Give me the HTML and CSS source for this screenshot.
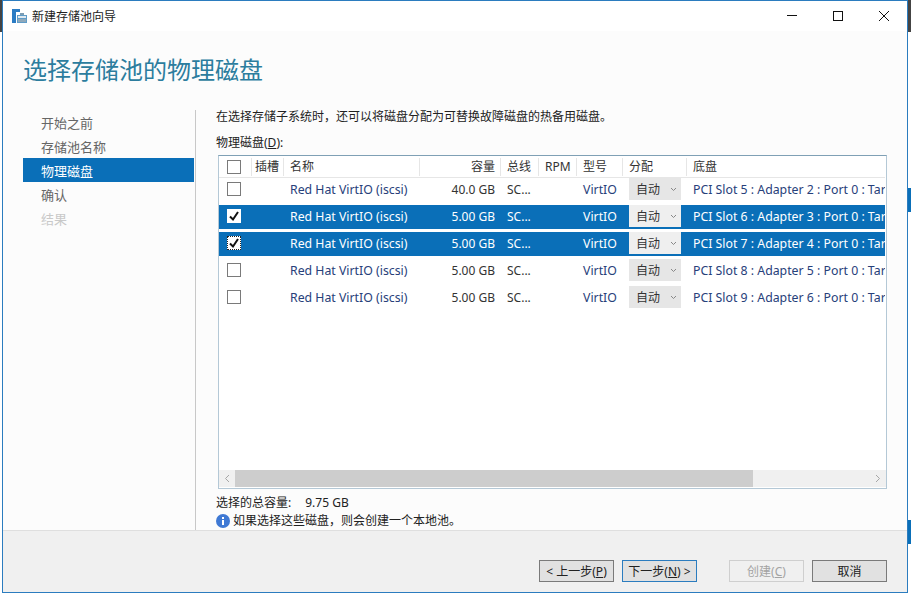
FILE: index.html
```html
<!DOCTYPE html>
<html lang="zh-CN">
<head>
  <meta charset="UTF-8" />
  <title>新建存储池向导</title>
  <link rel="stylesheet" href="styles.css">
</head>
<body>
  <div class="desk desk-tl"></div>
  <div class="desk desk-tr"></div>
  <div class="desk desk-b1"></div>
  <div class="desk desk-b2"></div>

  <div class="window">
    <div class="titlebar">
      <svg class="app-icon" width="15" height="14" viewBox="0 0 15 14">
        <path d="M0 0h8v3H4v11H0z" fill="#2b7cc4"/>
        <path d="M5 6h10v8H5z" fill="#5f9cc8"/>
        <path d="M6 7h8v2H6z" fill="#dfe9f0"/>
        <path d="M6 10h8v3H6z" fill="#8fa9bb"/>
        <path d="M8 4h4v2H8z" fill="#7d9db3"/>
      </svg>
      <span class="title-text">新建存储池向导</span>
      <div class="win-controls">
        <svg width="12" height="12" viewBox="0 0 12 12"><path d="M1 5.5h10" stroke="#111" stroke-width="1"/></svg>
        <svg width="12" height="12" viewBox="0 0 12 12"><rect x="1.5" y="1.5" width="9" height="9" fill="none" stroke="#111"/></svg>
        <svg width="12" height="12" viewBox="0 0 12 12"><path d="M1 1l10 10M11 1L1 11" stroke="#111" stroke-width="1"/></svg>
      </div>
    </div>

    <h1 class="heading">选择存储池的物理磁盘</h1>

    <div class="main">
      <ul class="steps">
        <li>开始之前</li>
        <li>存储池名称</li>
        <li class="active">物理磁盘</li>
        <li>确认</li>
        <li class="off">结果</li>
      </ul>

      <div class="content">
        <p class="intro">在选择存储子系统时，还可以将磁盘分配为可替换故障磁盘的热备用磁盘。</p>
        <p class="list-label">物理磁盘(<u>D</u>):</p>

        <div class="disk-table">
          <div class="row head">
            <div class="cell c-check"><span class="box"></span></div>
            <div class="cell c-slot">插槽</div>
            <div class="cell">名称</div>
            <div class="cell right">容量</div>
            <div class="cell">总线</div>
            <div class="cell">RPM</div>
            <div class="cell">型号</div>
            <div class="cell">分配</div>
            <div class="cell">底盘</div>
          </div>

          <div class="rows">
            <div class="row">
              <div class="cell c-check"><span class="box"></span></div>
              <div class="cell"></div>
              <div class="cell link">Red Hat VirtIO (iscsi)</div>
              <div class="cell right">40.0 GB</div>
              <div class="cell">SC...</div>
              <div class="cell"></div>
              <div class="cell link">VirtIO</div>
              <div class="cell"><span class="combo">自动<svg width="7" height="5" viewBox="0 0 7 5"><path d="M1 1l2.500 2.500L6 1" fill="none" stroke="#888"/></svg></span></div>
              <div class="cell link">PCI Slot 5 : Adapter 2 : Port 0 : Tar</div>
            </div>

            <div class="row selected">
              <div class="cell c-check"><span class="box checked"><svg width="12" height="12" viewBox="0 0 12 12"><path d="M2 6.500l3 3 5-7.500" fill="none" stroke="#111" stroke-width="2"/></svg></span></div>
              <div class="cell"></div>
              <div class="cell link">Red Hat VirtIO (iscsi)</div>
              <div class="cell right">5.00 GB</div>
              <div class="cell">SC...</div>
              <div class="cell"></div>
              <div class="cell link">VirtIO</div>
              <div class="cell"><span class="combo">自动<svg width="7" height="5" viewBox="0 0 7 5"><path d="M1 1l2.500 2.500L6 1" fill="none" stroke="#888"/></svg></span></div>
              <div class="cell link">PCI Slot 6 : Adapter 3 : Port 0 : Tar</div>
            </div>

            <div class="row selected">
              <div class="cell c-check"><span class="box checked focus"><svg width="12" height="12" viewBox="0 0 12 12"><path d="M2 6.500l3 3 5-7.500" fill="none" stroke="#111" stroke-width="2"/></svg></span></div>
              <div class="cell"></div>
              <div class="cell link">Red Hat VirtIO (iscsi)</div>
              <div class="cell right">5.00 GB</div>
              <div class="cell">SC...</div>
              <div class="cell"></div>
              <div class="cell link">VirtIO</div>
              <div class="cell"><span class="combo">自动<svg width="7" height="5" viewBox="0 0 7 5"><path d="M1 1l2.500 2.500L6 1" fill="none" stroke="#888"/></svg></span></div>
              <div class="cell link">PCI Slot 7 : Adapter 4 : Port 0 : Tar</div>
            </div>

            <div class="row">
              <div class="cell c-check"><span class="box"></span></div>
              <div class="cell"></div>
              <div class="cell link">Red Hat VirtIO (iscsi)</div>
              <div class="cell right">5.00 GB</div>
              <div class="cell">SC...</div>
              <div class="cell"></div>
              <div class="cell link">VirtIO</div>
              <div class="cell"><span class="combo">自动<svg width="7" height="5" viewBox="0 0 7 5"><path d="M1 1l2.500 2.500L6 1" fill="none" stroke="#888"/></svg></span></div>
              <div class="cell link">PCI Slot 8 : Adapter 5 : Port 0 : Tar</div>
            </div>

            <div class="row">
              <div class="cell c-check"><span class="box"></span></div>
              <div class="cell"></div>
              <div class="cell link">Red Hat VirtIO (iscsi)</div>
              <div class="cell right">5.00 GB</div>
              <div class="cell">SC...</div>
              <div class="cell"></div>
              <div class="cell link">VirtIO</div>
              <div class="cell"><span class="combo">自动<svg width="7" height="5" viewBox="0 0 7 5"><path d="M1 1l2.500 2.500L6 1" fill="none" stroke="#888"/></svg></span></div>
              <div class="cell link">PCI Slot 9 : Adapter 6 : Port 0 : Tar</div>
            </div>
          </div>

          <div class="hscroll">
            <div class="arrow"><svg width="6" height="9" viewBox="0 0 6 9"><path d="M5 1L1.500 4.500 5 8" fill="none" stroke="#a6a6a6"/></svg></div>
            <div class="thumb"></div>
            <div class="arrow end"><svg width="6" height="9" viewBox="0 0 6 9"><path d="M1 1l3.500 3.500L1 8" fill="none" stroke="#a6a6a6"/></svg></div>
          </div>
        </div>

        <div class="total"><span>选择的总容量:</span><span>9.75 GB</span></div>
        <div class="notice">
          <svg width="14" height="14" viewBox="0 0 14 14"><circle cx="7" cy="7" r="7" fill="#3f79d4"/><path d="M6 3h2v2H6zM6 6h2v5H6z" fill="#fff"/></svg>
          <span>如果选择这些磁盘，则会创建一个本地池。</span>
        </div>
      </div>
    </div>

    <div class="footer">
      <button class="btn">&lt; 上一步(<u>P</u>)</button>
      <button class="btn primary">下一步(<u>N</u>) &gt;</button>
      <button class="btn disabled">创建(<u>C</u>)</button>
      <button class="btn">取消</button>
    </div>
  </div>
</body>
</html>
```

FILE: styles.css
```css
* {
  box-sizing: border-box;
}
html, body {
  margin: 0;
  height: 100%;
  overflow: hidden;
}
body {
  background: #fff;
  font-family: "Noto Sans", "Noto Sans CJK SC", sans-serif;
  font-size: 12px;
  color: #222;
}

/* bits of the desktop showing round the window */
.desk {
  position: absolute;
}
.desk-tl {
  left: 0;
  top: 0;
  width: 2px;
  height: 32px;
  background: #444;
}
.desk-tr {
  left: 908px;
  top: 0;
  width: 3px;
  height: 32px;
  background: #444;
}
.desk-b1 {
  left: 908px;
  top: 188px;
  width: 3px;
  height: 24px;
  background: #0a6fb8;
}
.desk-b2 {
  left: 908px;
  top: 520px;
  width: 3px;
  height: 24px;
  background: #0a6fb8;
}

.window {
  margin-left: 2px;
  width: 906px;
  height: 593px;
  border: 1px solid #2b7cbf;
  background: #fcfcfc;
  display: flex;
  flex-direction: column;
}

.titlebar {
  height: 30px;
  flex: none;
  background: #fff;
  display: flex;
  align-items: center;
  padding-left: 9px;
}
.app-icon {
  margin-right: 5px;
}
.title-text {
  font-size: 12px;
  color: #222;
}
.win-controls {
  margin-left: auto;
  display: flex;
  gap: 34px;
  padding-right: 17px;
}

.heading {
  margin: 0;
  height: 78px;
  flex: none;
  padding: 20px 0 0 20px;
  font-size: 24px;
  line-height: 38px;
  font-weight: 400;
  color: #2c7d9e;
}

.main {
  flex: 1;
  display: flex;
  min-height: 0;
}

.steps {
  list-style: none;
  margin: 1px 0 0 20px;
  padding: 0;
  width: 173px;
  flex: none;
  border-right: 1px solid #c8c8c8;
  font-size: 13px;
}
.steps li {
  height: 24px;
  line-height: 26px;
  padding-left: 18px;
  margin-right: 1px;
  color: #666;
}
.steps .active {
  background: #0a6fb8;
  color: #fff;
}
.steps .off {
  color: #c9c9c9;
}

.content {
  padding-left: 20px;
  width: 691px;
}
.intro {
  margin: 0;
  line-height: 16px;
}
.list-label {
  margin: 10px 0 4px;
  line-height: 16px;
}

.disk-table {
  width: 669px;
  height: 334px;
  margin-left: 2px;
  border: 1px solid #b4c8d6;
  border-top-color: #7fa0b5;
  background: #fff;
  display: flex;
  flex-direction: column;
}

.row {
  display: grid;
  grid-template-columns: 32px 32px 136px 81px 38px 38px 46px 64px 199px;
  height: 24px;
  width: 666px;
  align-items: center;
}
.row.head {
  height: 22px;
  flex: none;
  border-bottom: 1px solid #e6e6e6;
  color: #333;
}
.head .cell {
  height: 18px;
  line-height: 18px;
  padding-left: 6px;
  border-left: 1px solid #e6e6e6;
}
.head .cell.c-check {
  border-left: none;
  padding-left: 8px;
}
.head .cell.c-slot {
  padding-left: 3px;
}
.rows {
  flex: 1;
  display: flex;
  flex-direction: column;
  gap: 3px;
}
.rows .cell {
  padding-bottom: 2px;
}
.cell {
  padding-left: 7px;
  white-space: nowrap;
  overflow: hidden;
  color: #333;
}
.cell.right {
  text-align: right;
  padding-right: 5px;
}
.cell.link {
  font-size: 12.3px;
  color: #27407a;
}
.c-check {
  padding-left: 8px;
  display: flex;
  align-items: center;
}
.box {
  width: 14px;
  height: 14px;
  display: block;
  border: 1px solid #7a7a7a;
  background: #fff;
}
.box.checked {
  border-color: #fff;
}
.box svg {
  display: block;
}
.box.focus {
  outline: 1px dotted #222;
  outline-offset: -1px;
}

.selected {
  background: #0a6fb8;
}
.selected .cell,
.selected .cell.link {
  color: #fff;
}

.combo {
  width: 52px;
  height: 22px;
  background: #e6e6e6;
  color: #333;
  display: flex;
  align-items: center;
  padding-left: 7px;
  gap: 10px;
}
.selected .combo {
  background: #efefef;
}

.hscroll {
  height: 17px;
  flex: none;
  margin-bottom: 1px;
  background: #f0f0f0;
  display: flex;
}
.arrow {
  width: 16px;
  display: flex;
  align-items: center;
  justify-content: center;
  flex: none;
}
.arrow.end {
  margin-left: auto;
}
.thumb {
  width: 518px;
  background: #cdcdcd;
}

.total {
  margin-top: 6px;
  line-height: 16px;
  display: flex;
  gap: 14px;
}
.notice {
  margin-top: 2px;
  line-height: 16px;
  display: flex;
  align-items: center;
  gap: 3px;
}

.footer {
  height: 62px;
  flex: none;
  background: #f0f0f0;
  border-top: 1px solid #dfdfdf;
  display: flex;
  padding: 29px 20px 0 0;
  justify-content: flex-end;
  align-items: flex-start;
  gap: 8px;
}
.btn {
  width: 75px;
  height: 22px;
  padding: 0;
  border: 1px solid #7a7a7a;
  background: #e1e1e1;
  font: inherit;
  color: #222;
}
.btn.primary {
  border-color: #2b7cbf;
  margin-right: 24px;
}
.btn.disabled {
  border-color: #cfcfcf;
  background: #f0f0f0;
  color: #a3a3a3;
}
```
